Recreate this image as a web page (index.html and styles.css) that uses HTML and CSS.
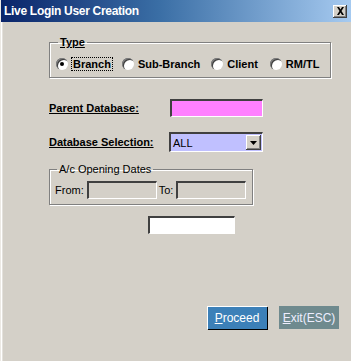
FILE: index.html
```html
<!DOCTYPE html>
<html>
<head>
    <meta charset="UTF-8">
    <title>Live Login User Creation</title>
    <link rel="stylesheet" href="styles.css">
</head>
<body>
    <div class="window">
        <div class="titlebar">
            <span class="title">Live Login User Creation</span>
            <span class="close">
                <svg width="9" height="8" viewBox="0 0 9 8"><path d="M1 0h2l1.5 2.5L6 0h2L5.5 4 8 8H6L4.5 5.5 3 8H1l2.5-4z" fill="#000"/></svg>
            </span>
        </div>

        <div class="content">
            <fieldset class="group type-group">
                <legend class="bold"><u>Type</u></legend>
                <div class="radios">
                    <label class="radio"><span class="dot checked"></span><span class="focus">Branch</span></label>
                    <label class="radio"><span class="dot"></span>Sub-Branch</label>
                    <label class="radio"><span class="dot"></span>Client</label>
                    <label class="radio"><span class="dot"></span>RM/TL</label>
                </div>
            </fieldset>

            <div class="row row-parent">
                <span class="field-label">Parent Database:</span>
                <span class="textbox pink"></span>
            </div>

            <div class="row row-db">
                <span class="field-label">Database Selection:</span>
                <span class="combo">
                    <span class="combo-text">ALL</span>
                    <span class="combo-btn">
                        <svg width="7" height="4" viewBox="0 0 7 4"><path d="M0 0h7L3.5 4z" fill="#000"/></svg>
                    </span>
                </span>
            </div>

            <fieldset class="group dates-group">
                <legend>A/c Opening Dates</legend>
                <div class="dates">
                    <span>From:</span>
                    <span class="textbox grey"></span>
                    <span>To:</span>
                    <span class="textbox grey"></span>
                </div>
            </fieldset>

            <div class="row row-blank">
                <span class="textbox white"></span>
            </div>

            <div class="buttons">
                <button class="btn proceed"><u>P</u>roceed</button>
                <button class="btn exit"><u>E</u>xit(ESC)</button>
            </div>
        </div>
    </div>
</body>
</html>
```

FILE: styles.css
```css
body {
    margin: 0;
    background: #d4d0c8;
    font-family: "Liberation Sans", Arial, sans-serif;
    font-size: 11px;
    color: #000;
}
.window {
    width: 351px;
    height: 361px;
    box-sizing: border-box;
    border-left: 1px solid #ece9e4;
    box-shadow: inset 1px 0 0 #fff, inset 2px 0 0 #e4e1dc;
    overflow: hidden;
}
.titlebar {
    height: 22px;
    display: flex;
    align-items: center;
    justify-content: space-between;
    padding: 0 4px 0 3px;
    background: linear-gradient(to right, #0a246a 0%, #3a6ea5 45%, #a6caf0 100%);
}
.title {
    color: #fff;
    font-weight: bold;
    font-size: 12px;
    letter-spacing: -0.3px;
}
.close {
    width: 14px;
    height: 13px;
    display: flex;
    align-items: center;
    justify-content: center;
    background: #d4d0c8;
    box-shadow: inset -1px -1px 0 #404040, inset 1px 1px 0 #fff, inset -2px -2px 0 #808080;
}
.content {
    padding: 14px 0 0 48px;
}
.bold {
    font-weight: bold;
}
.group {
    margin: 0;
    border: 1px solid #808080;
    box-shadow: 1px 1px 0 #fff, inset 1px 1px 0 #fff;
}
.group legend {
    padding: 0 2px;
    margin-left: 2px;
}
.type-group {
    width: 282px;
    height: 42px;
    box-sizing: border-box;
    padding: 10px 0 0 6px;
}
.radios {
    display: flex;
    align-items: center;
    white-space: nowrap;
}
.radio {
    display: flex;
    align-items: center;
    flex-shrink: 0;
    font-weight: bold;
    margin-right: 10px;
}
.radio:nth-child(2) {
    margin-right: 11px;
}
.radio:nth-child(3) {
    margin-right: 12px;
}
.dot {
    width: 12px;
    height: 12px;
    flex-shrink: 0;
    border-radius: 50%;
    background: #fff;
    box-shadow: inset 1px 1px 0 #808080, inset 2px 2px 0 #404040;
    margin-right: 4px;
    position: relative;
}
.dot.checked::after {
    content: "";
    position: absolute;
    left: 4px;
    top: 4px;
    width: 4px;
    height: 4px;
    border-radius: 50%;
    background: #000;
}
.focus {
    outline: 1px dotted #000;
    padding: 0 1px;
}
.row {
    display: flex;
    align-items: center;
}
.row-parent {
    margin-top: 21px;
}
.row-db {
    margin-top: 15px;
}
.field-label {
    font-weight: bold;
    text-decoration: underline;
    width: 121px;
}
.textbox {
    display: block;
    box-sizing: border-box;
    height: 18px;
    border-top: 2px solid #404040;
    border-left: 2px solid #404040;
    border-right: 1px solid #fff;
    border-bottom: 1px solid #fff;
}
.pink {
    width: 93px;
    background: #ff80ff;
}
.combo {
    display: flex;
    align-items: center;
    box-sizing: border-box;
    width: 94px;
    height: 20px;
    margin-left: -1px;
    background: #c0c0ff;
    border-top: 2px solid #404040;
    border-left: 2px solid #404040;
    border-right: 1px solid #fff;
    border-bottom: 1px solid #fff;
}
.combo-text {
    flex: 1;
    padding-left: 2px;
}
.combo-btn {
    width: 15px;
    height: 15px;
    margin-right: 1px;
    display: flex;
    align-items: center;
    justify-content: center;
    background: #d4d0c8;
    box-shadow: inset -1px -1px 0 #404040, inset 1px 1px 0 #fff, inset -2px -2px 0 #808080;
}
.dates-group {
    margin-top: 11px;
    width: 204px;
    height: 42px;
    box-sizing: border-box;
    padding: 6px 0 0 5px;
    color: #000;
}
.dates {
    display: flex;
    align-items: center;
}
.dates .grey {
    width: 70px;
    background: #d4d0c8;
    margin: 0 2px 0 3px;
}
.row-blank {
    margin-top: 11px;
    padding-left: 99px;
}
.white {
    width: 87px;
    background: #fff;
}
.buttons {
    display: flex;
    gap: 12px;
    margin: 72px 0 0 158px;
}
.btn {
    width: 60px;
    height: 23px;
    font-family: "Liberation Sans", Arial, sans-serif;
    font-size: 12px;
    color: #fff;
    border: none;
    padding: 0;
}
.proceed {
    background: #3c80b8;
    box-shadow: inset 1px 1px 0 #fff, 1px 1px 0 #000;
}
.exit {
    background: #6f8a8e;
    color: #eef;
}
```
